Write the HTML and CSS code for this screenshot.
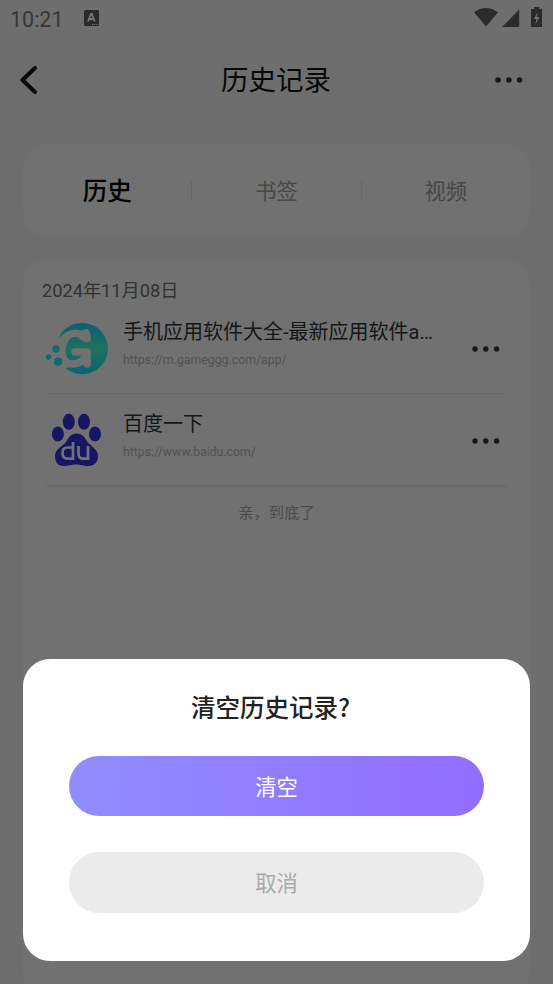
FILE: index.html
```html
<!DOCTYPE html>
<html lang="zh-CN">
<head>
<meta charset="utf-8">
<title>历史记录</title>
<link rel="stylesheet" href="styles.css">
</head>
<body>
<div class="status">
  <span class="time">10:21</span>
  <svg class="app-icon" width="15" height="16" viewBox="0 0 15 16"><rect width="15" height="16" rx="1.5" fill="#2a2a2a"/><path d="M4 11.5 7 4h.8l3 7.5M5.2 9h4.4" fill="none" stroke="#777" stroke-width="1.8"/><path d="M8 14.5h6" stroke="#777" stroke-dasharray="1.2 1"/></svg>
  <svg class="signals" width="69" height="22" viewBox="0 0 69 22" fill="#2b2b2b">
    <path d="M0 5.3Q12-3.4 24 5.3L12 19.5Z"/><path d="M28 20 45.2 2.6V18.5q0 1.5-1.5 1.5Z"/><path d="M58 2h2.3V0h5.2v2H68v18H57V2Z"/><path d="M63.7 5 59.8 12h2.5l-.8 5.5 4-7.5H63Z" fill="#6e6e6e"/>
  </svg>
</div>
<header class="header">
  <svg class="back" width="18" height="28" viewBox="0 0 18 28"><path d="M15 2 2.500 14 15 26" fill="none" stroke="#080808" stroke-width="4" stroke-linecap="round" stroke-linejoin="round"/></svg>
  <h1>历史记录</h1>
  <svg class="more" width="28" height="6" viewBox="0 0 28 6" fill="#181818"><circle cx="3" cy="3" r="2.8"/><circle cx="13.8" cy="3" r="2.8"/><circle cx="24.6" cy="3" r="2.8"/></svg>
</header>
<nav class="tabs">
  <span class="tab active">历史</span>
  <span class="tab">书签</span>
  <span class="tab">视频</span>
</nav>
<main class="list">
  <div class="date">2024年11月08日</div>
  <article class="item">
    <svg class="logo" width="66" height="56" viewBox="0 0 66 56">
      <defs><linearGradient id="g" x1="0" y1="0" x2="0" y2="1"><stop offset="0" stop-color="#08616d"/><stop offset=".5" stop-color="#21705f"/><stop offset="1" stop-color="#076476"/></linearGradient></defs>
      <path d="M13 18C18 7 27 2 37 2A25.600 25.600 0 1 1 20 46.500L16 40Z" fill="url(#g)"/>
      <path d="M11 19 20 12V20L17 27V36L23 47H11Z" fill="#717171"/>
      <path d="M42 17.500Q38 17 36 13.500Q29 10.500 23 14.500Q16 22 17 31Q18 43 27 43Q34 43 39 38M30 31H42V43" fill="none" stroke="#717171" stroke-width="7.500" stroke-linecap="round" stroke-linejoin="round"/>
      <path d="M37 9 43 8 46 14 44 21 38 19Z" fill="#717171"/>
      <path d="m11 24 3.400 2v4L11 32l-3.400-2v-4ZM3.400 33 6 34.500v3L3.400 39 1 37.500v-3ZM13 36l4 2.300v4.600L13 45.300l-4-2.400v-4.600Z" fill="#11696b"/>
    </svg>
    <div class="info"><h2>手机应用软件大全-最新应用软件a…</h2><p>https://m.gameggg.com/app/</p></div>
    <svg class="more" width="28" height="6" viewBox="0 0 28 6" fill="#181818"><circle cx="3" cy="3" r="2.7"/><circle cx="13.8" cy="3" r="2.7"/><circle cx="24.6" cy="3" r="2.7"/></svg>
  </article>
  <article class="item second">
    <svg class="logo" width="66" height="56" viewBox="0 0 66 56">
      <g fill="#161665"><ellipse cx="12.900" cy="23" rx="6" ry="7.600"/><ellipse cx="23.800" cy="10.800" rx="6" ry="8"/><ellipse cx="39" cy="10.800" rx="6" ry="8"/><ellipse cx="50" cy="23" rx="6" ry="7.600"/>
      <path d="M31.500 22.500C37 22.500 39.500 26 42.500 31C46.500 36 53 38 53 45.500C53 51 49 55 43.500 55C38 55 36 53.500 31 53.500C26 53.500 23 55 18.500 55C13 55 10 51 10 45C10 38 17 36 21 31C24 26 26 22.500 31.500 22.500Z"/></g>
      <path d="M28 31V49M28 36.500H22.500Q17.500 36.500 17.500 42T22.500 47.700H28M33.500 35V42.500Q33.500 47.700 38 47.700H43M43 35V49" fill="none" stroke="#737373" stroke-width="2.700"/>
    </svg>
    <div class="info"><h2>百度一下</h2><p>https://www.baidu.com/</p></div>
    <svg class="more" width="28" height="6" viewBox="0 0 28 6" fill="#181818"><circle cx="3" cy="3" r="2.7"/><circle cx="13.8" cy="3" r="2.7"/><circle cx="24.6" cy="3" r="2.7"/></svg>
  </article>
  <p class="end">亲，到底了</p>
</main>
<div class="dialog" role="dialog">
  <h3>清空历史记录?</h3>
  <button class="btn primary">清空</button>
  <button class="btn cancel">取消</button>
</div>
</body>
</html>
```
FILE: styles.css
```css
* { box-sizing: border-box; margin: 0; padding: 0; }
body {
  width: 553px; height: 984px; overflow: hidden; position: relative;
  background: #6e6e6e;
  font-family: Roboto, "Noto Sans CJK SC", sans-serif;
}
svg { display: block; flex: none; }
h1, h2, h3 { font-weight: 400; }
.status { height: 40px; display: flex; align-items: center; padding: 0 10px; }
.time { width: 74px; font-size: 21.5px; line-height: 40px; color: #373737; }
.app-icon { margin-bottom: 4px; }
.signals { margin-left: auto; margin-bottom: 4px; }
.header { height: 80px; display: flex; align-items: center; justify-content: space-between; padding: 0 30px 0 20px; }
.header h1 { font-size: 27.5px; line-height: 40px; color: #080808; padding: 2px 0 0 19px; }
.tabs { height: 94px; margin: 23px 23px 0; border-radius: 25px; background: #717171; display: flex; align-items: center; }
.tab { flex: 1; height: 20px; text-align: center; font-size: 21.3px; line-height: 23px; color: #474747; }
.tab + .tab { border-left: 1px solid #676767; }
.tab.active { font-size: 24.5px; font-weight: 500; line-height: 24px; color: #000; }
.list { height: 740px; margin: 22px 23px 0; border-radius: 25px; background: #717171; padding: 19px 23px 0; }
.date { margin-left: -4px; font-size: 18.2px; line-height: 26px; color: #313131; }
.item { height: 90px; display: flex; align-items: center; border-bottom: 1px solid #696969; }
.item.second { height: 93px; border-bottom: 2px solid #6a6a6a; }
.logo { margin-left: -1px; }
.second .logo { margin-top: -2px; }
.info { flex: 1; margin: -11px 0 0 12px; white-space: nowrap; }
.second .info { margin-top: -8px; }
.info h2 { font-size: 20px; line-height: 28px; color: #151617; }
.info p { font-size: 12.3px; line-height: 18px; margin-top: 5px; color: #505252; }
.item .more { margin-right: 7px; }
.second .more { margin-top: 2px; }
.end { text-align: center; font-size: 15.3px; line-height: 22px; margin-top: 15px; color: #4b4b4b; }
.dialog {
  position: absolute; left: 23px; top: 659px; width: 507px; height: 302px;
  background: #fff; border-radius: 27px; padding: 31px 46px 0;
  display: flex; flex-direction: column;
}
.dialog h3 { font-family: "Noto Sans CJK SC", sans-serif; font-size: 24.5px; line-height: 34px; font-weight: 500; color: #222; text-align: center; padding-right: 12px; }
.btn { border: 0; border-radius: 31px; padding-bottom: 2px; font: 21.3px Roboto, "Noto Sans CJK SC", sans-serif; }
.primary { height: 60px; margin-top: 32px; color: #fff; background: linear-gradient(90deg, #918dff, #916dff); }
.cancel { height: 61px; margin-top: 36px; color: #aaa; background: #ebebeb; }
```
